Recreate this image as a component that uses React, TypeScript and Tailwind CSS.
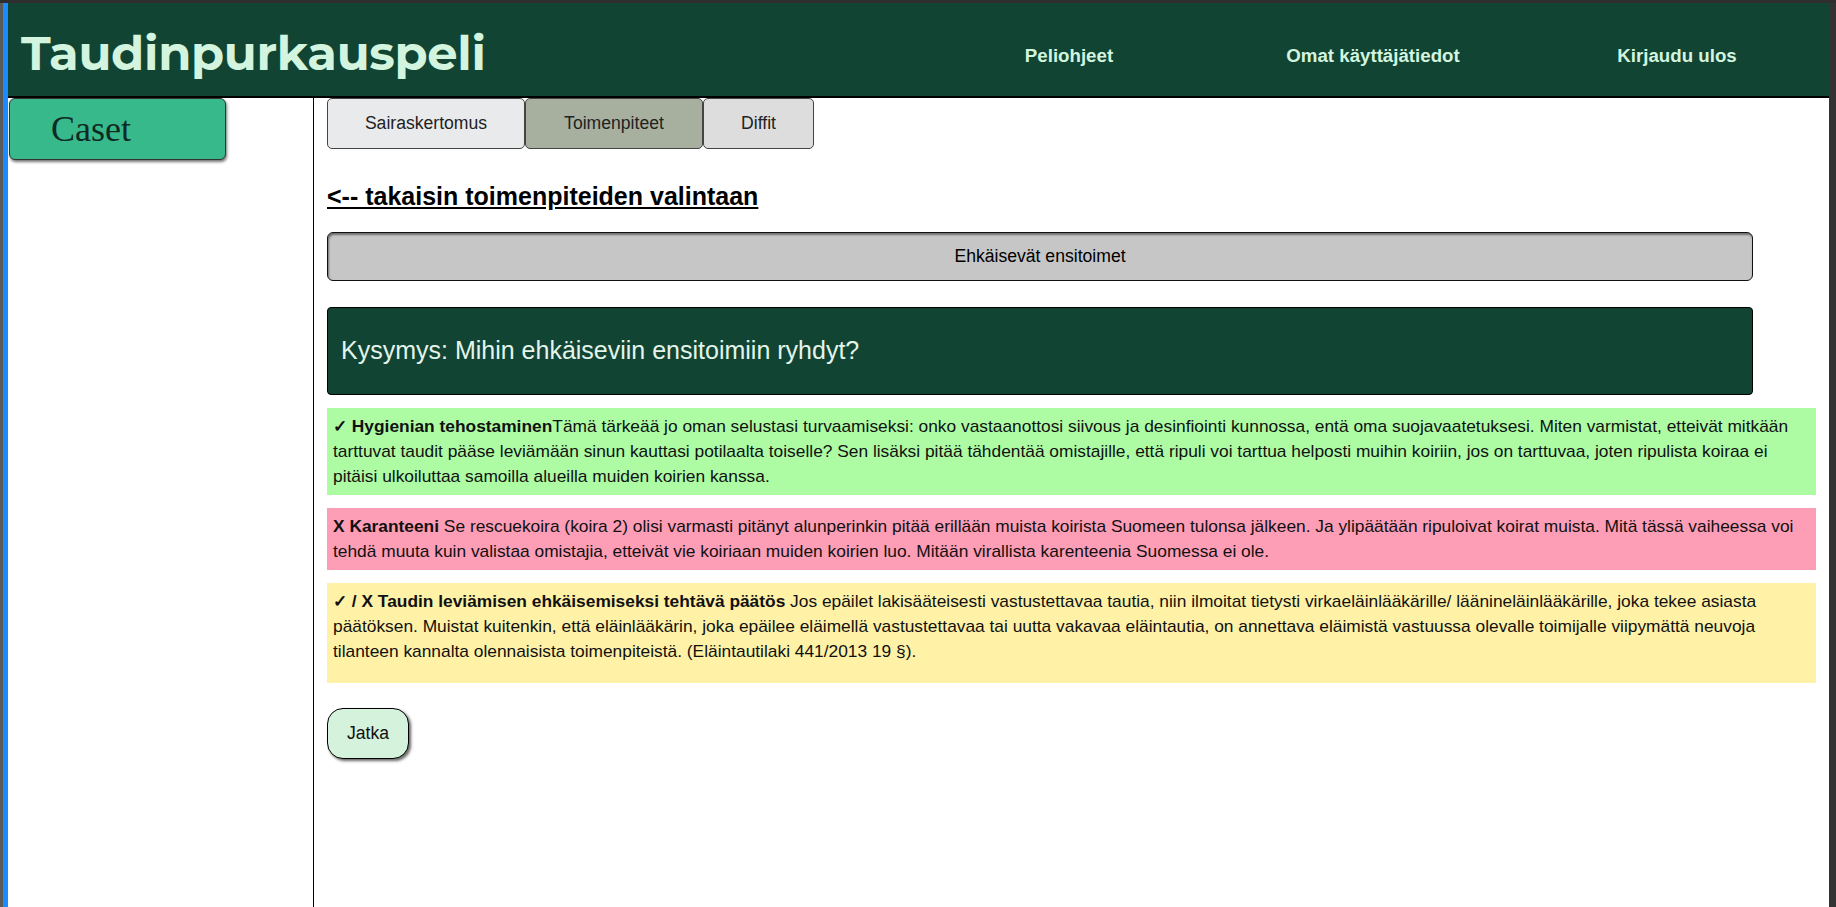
import React from "react";

const sans = { fontFamily: '"Liberation Sans", Arial, sans-serif' };

export default function App() {
  return (
    <div className="w-[1836px] h-[907px] flex flex-col bg-[#2b2b2b] overflow-hidden" style={sans}>
      <div className="h-[3px] shrink-0 bg-[#2e2e2e]" />
      <div className="flex flex-1 min-h-0">
        <div className="w-[3px] bg-[#5a5a5a]" />
        <div className="w-[5px] bg-[#1a8cff]" />
        <div className="flex-1 bg-white flex flex-col min-w-0">
          <header className="h-[95px] shrink-0 bg-[#124434] border-b-2 border-black flex items-center">
            <div
              className="pl-[13px] pt-[6px] text-[48px] font-bold text-[#d3f5df] leading-none tracking-[-0.3px]"
              style={{ fontFamily: '"Montserrat", "Open Sans", sans-serif' }}
            >
              Taudinpurkauspeli
            </div>
            <nav className="ml-auto flex pt-[14px]">
              {["Peliohjeet", "Omat käyttäjätiedot", "Kirjaudu ulos"].map((t) => (
                <div key={t} className="w-[304px] text-center text-[18.7px] font-bold text-[#d3f5df]">
                  {t}
                </div>
              ))}
            </nav>
          </header>
          <div className="flex flex-1 min-h-0">
            <aside className="w-[306px] shrink-0 border-r border-black">
              <div
                className="ml-[1px] w-[217px] h-[62px] bg-[#38b98b] rounded-[6px] border border-[#333] shadow-[1px_2px_3px_rgba(0,0,0,0.55)] flex items-center pl-[41px] text-[36px] text-[#0f2a22]"
                style={{ fontFamily: '"Liberation Serif", "Times New Roman", serif' }}
              >
                Caset
              </div>
            </aside>
            <main className="flex-1 pl-[13px] pr-[13px] flex flex-col text-[#111]">
              <div className="flex h-[51px] text-[17.6px] text-[#222]">
                <div className="w-[198px] flex items-center justify-center bg-[#e9eaec] border border-[#444] rounded-[5px]">
                  Sairaskertomus
                </div>
                <div className="w-[178px] flex items-center justify-center bg-[#a7b09e] border border-[#444] rounded-[5px]">
                  Toimenpiteet
                </div>
                <div className="w-[111px] flex items-center justify-center bg-[#dddddd] border border-[#444] rounded-[5px]">
                  Diffit
                </div>
              </div>
              <div className="mt-[33px] h-[29px] leading-[29px] text-[25px] font-bold underline text-black">
                &lt;-- takaisin toimenpiteiden valintaan
              </div>
              <div className="mt-[21px] w-[1426px] h-[49px] bg-[#c6c6c6] border border-[#111] rounded-[6px] shadow-[inset_1px_2px_2px_rgba(0,0,0,0.45)] flex items-center justify-center text-[17.6px] text-black">
                Ehkäisevät ensitoimet
              </div>
              <div className="mt-[26px] w-[1426px] h-[88px] bg-[#124434] border border-black rounded-[4px] flex items-center pl-[13px] text-[25px] text-[#e3f5ea]">
                Kysymys: Mihin ehkäiseviin ensitoimiin ryhdyt?
              </div>
              <div className="mt-[13px] bg-[#adfca4] px-[6px] py-[6px] text-[17.35px] leading-[25px]">
                <b>✓ Hygienian tehostaminen</b>Tämä tärkeää jo oman selustasi turvaamiseksi: onko vastaanottosi siivous ja desinfiointi kunnossa, entä oma suojavaatetuksesi. Miten varmistat, etteivät mitkään tarttuvat taudit pääse leviämään sinun kauttasi potilaalta toiselle? Sen lisäksi pitää tähdentää omistajille, että ripuli voi tarttua helposti muihin koiriin, jos on tarttuvaa, joten ripulista koiraa ei pitäisi ulkoiluttaa samoilla alueilla muiden koirien kanssa.
              </div>
              <div className="mt-[13px] bg-[#fe9db6] px-[6px] py-[6px] text-[17.35px] leading-[25px]">
                <b>X Karanteeni</b> Se rescuekoira (koira 2) olisi varmasti pitänyt alunperinkin pitää erillään muista koirista Suomeen tulonsa jälkeen. Ja ylipäätään ripuloivat koirat muista. Mitä tässä vaiheessa voi tehdä muuta kuin valistaa omistajia, etteivät vie koiriaan muiden koirien luo. Mitään virallista karenteenia Suomessa ei ole.
              </div>
              <div className="mt-[13px] bg-[#fff1a6] px-[6px] pt-[6px] pb-[19px] text-[17.35px] leading-[25px]">
                <b>✓ / X Taudin leviämisen ehkäisemiseksi tehtävä päätös</b> Jos epäilet lakisääteisesti vastustettavaa tautia, niin ilmoitat tietysti virkaeläinlääkärille/ läänineläinlääkärille, joka tekee asiasta päätöksen. Muistat kuitenkin, että eläinlääkärin, joka epäilee eläimellä vastustettavaa tai uutta vakavaa eläintautia, on annettava eläimistä vastuussa olevalle toimijalle viipymättä neuvoja tilanteen kannalta olennaisista toimenpiteistä. (Eläintautilaki 441/2013 19 §).
              </div>
              <div className="mt-[25px] w-[82px] h-[51px] bg-[#d4f2dc] border border-black rounded-[16px] shadow-[2px_2px_3px_rgba(0,0,0,0.6)] flex items-center justify-center text-[17.6px] text-[#111]">
                Jatka
              </div>
            </main>
          </div>
        </div>
        <div className="w-[7px] bg-[#333333]" />
      </div>
    </div>
  );
}
